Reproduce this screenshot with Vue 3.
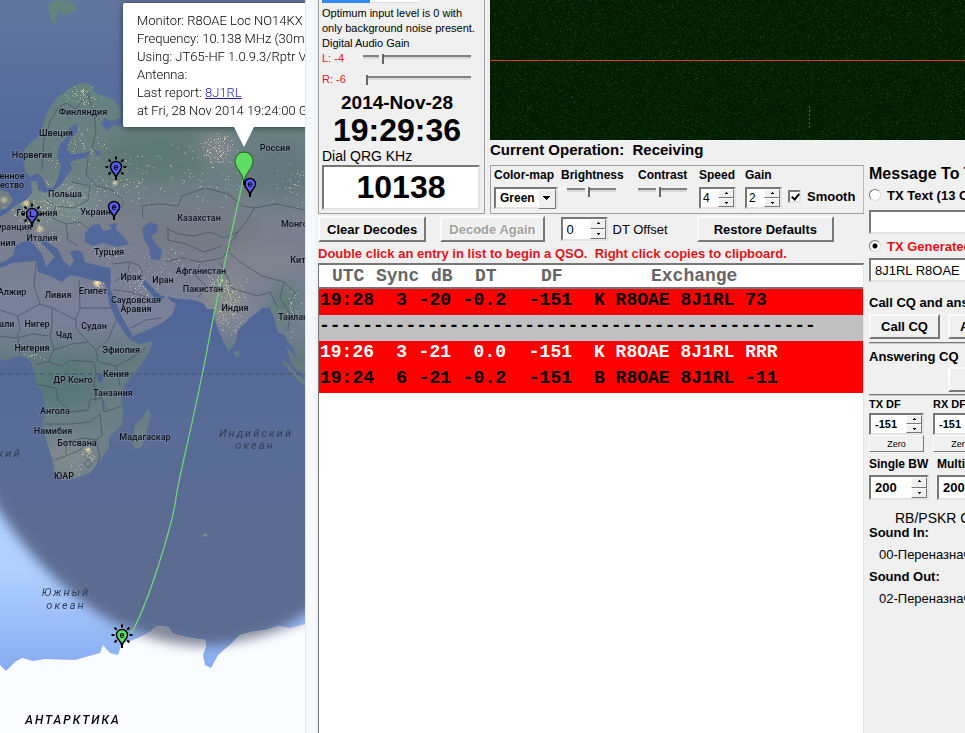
<script setup>
import { ref, onMounted } from 'vue'

const labels = [
  [83, 115, 'Финляндия'], [56, 136, 'Швеция'], [32, 158, 'Норвегия'], [12, 179, 'енное'], [12, 188, 'ество'],
  [65, 197, 'Польша'], [37, 216, 'Германия'], [98, 215, 'Украина'], [13, 230, 'Франция'], [42, 241, 'Италия'],
  [275, 151, 'Россия'], [199, 221, 'Казахстан'], [302, 227, 'Монголия'], [8, 246, 'ния'],
  [109, 255, 'Турция'], [131, 280, 'Ирак'], [163, 283, 'Иран'], [201, 274, 'Афганистан'], [203, 292, 'Пакистан'],
  [303, 263, 'Китай'], [12, 295, 'Алжир'], [58, 298, 'Ливия'], [93, 294, 'Египет'], [136, 303, 'Саудовская'],
  [136, 312, 'Аравия'], [235, 311, 'Индия'], [296, 320, 'Таиланд'], [3, 327, 'Мали'], [37, 327, 'Нигер'],
  [94, 329, 'Судан'], [64, 338, 'Чад'], [32, 351, 'Нигерия'], [121, 353, 'Эфиопия'], [116, 377, 'Кения'],
  [73, 383, 'ДР Конго'], [113, 396, 'Танзания'], [55, 414, 'Ангола'], [53, 434, 'Намибия'], [77, 446, 'Ботсвана'],
  [145, 440, 'Мадагаскар'], [64, 479, 'ЮАР']
]

const pins = [
  { x: 116, y: 180, c: 'e', sun: true, fill: '#5a5cf5' },
  { x: 114, y: 220, c: 'e', sun: false, fill: '#5a5cf5' },
  { x: 32, y: 227, c: 'L', sun: true, fill: '#5a5cf5' },
  { x: 250, y: 197, c: 'e', sun: false, fill: '#5a5cf5' },
  { x: 122, y: 648, c: 'e', sun: true, fill: '#5fdc62' }
]
const rays = [0, 45, 90, 135, 225, 270, 315]

function seeded(seed) {
  let s = seed
  return () => {
    s = (s * 1664525 + 1013904223) % 4294967296
    return s / 4294967296
  }
}

// [centre x, centre y, radius x, radius y, count]
const cities = [
  [25, 212, 28, 16, 120], [65, 200, 34, 26, 110], [80, 96, 24, 12, 70], [75, 150, 34, 24, 80], [118, 178, 34, 30, 90],
  [218, 148, 18, 16, 110], [200, 175, 60, 40, 90], [232, 305, 18, 32, 150], [218, 284, 14, 10, 60],
  [100, 288, 6, 8, 30], [140, 285, 20, 22, 60], [45, 240, 18, 14, 50], [110, 252, 24, 8, 30], [88, 452, 8, 8, 18],
  [30, 355, 18, 6, 18], [290, 310, 14, 30, 40], [170, 262, 34, 20, 40], [290, 180, 20, 34, 40], [78, 462, 20, 14, 16]
]
const rnd = seeded(11)
const lights = cities.flatMap(([cx, cy, rx, ry, n]) =>
  Array.from({ length: n }, () => ({
    x: Math.round(cx + (rnd() + rnd() - 1) * rx),
    y: Math.round(cy + (rnd() + rnd() - 1) * ry),
    o: 0.2 + rnd() * 0.5
  }))
)

const rows = [
  { tone: 'dark', cells: ['19:28', '3', '-20', '-0.2', '-151', 'K R8OAE 8J1RL 73'] },
  { tone: 'divider', text: '-'.repeat(46) },
  { tone: 'light', cells: ['19:26', '3', '-21', '0.0', '-151', 'K R8OAE 8J1RL RRR'] },
  { tone: 'dark', cells: ['19:24', '6', '-21', '-0.2', '-151', 'B R8OAE 8J1RL -11'] }
]

const waterfall = ref(null)
const mode = ref('generated')
const txText = ref('')
const txGenerated = ref('8J1RL R8OAE')

onMounted(() => {
  const c = waterfall.value
  c.width = c.clientWidth
  c.height = c.clientHeight
  const g = c.getContext('2d')
  const img = g.createImageData(c.width, c.height)
  const r = seeded(77)
  for (let i = 0; i < c.width * c.height; i++) {
    const n = r() * r() * r()
    const spark = r() > 0.997 ? 40 : 0
    img.data[i * 4] = 2 + n * 16 + spark / 3
    img.data[i * 4 + 1] = 26 + n * 56 + spark
    img.data[i * 4 + 2] = 2 + n * 18 + spark / 3
    img.data[i * 4 + 3] = 255
  }
  g.putImageData(img, 0, 0)
  g.fillStyle = '#2a7430'
  for (let y = 106; y < 130; y += 4) g.fillRect(319, y, 1, 2)
  g.fillStyle = '#d2460f'
  g.fillRect(0, 60, c.width, 1)
})
</script>

<template>
  <div class="screen">
    <section class="map">
      <svg class="map-art" viewBox="0 0 305 733" preserveAspectRatio="xMinYMin slice">
        <defs>
          <linearGradient id="day" x1="0" y1="0" x2="0" y2="1">
            <stop offset="0.78" stop-color="#b0d0ff" />
            <stop offset="0.92" stop-color="#86aaf0" />
          </linearGradient>
          <linearGradient id="night" x1="0" y1="0" x2="0" y2="733" gradientUnits="userSpaceOnUse">
            <stop offset="0" stop-color="#61759d" />
            <stop offset="0.2" stop-color="#53699c" />
            <stop offset="0.4" stop-color="#4f6598" />
            <stop offset="0.58" stop-color="#586c97" />
            <stop offset="0.75" stop-color="#5c6c91" />
          </linearGradient>
          <linearGradient id="ground" x1="0" y1="80" x2="0" y2="480" gradientUnits="userSpaceOnUse">
            <stop offset="0" stop-color="#64837f" />
            <stop offset="0.24" stop-color="#6b7f82" />
            <stop offset="0.36" stop-color="#797f8c" />
            <stop offset="0.6" stop-color="#7a809a" />
            <stop offset="0.7" stop-color="#637b7f" />
            <stop offset="1" stop-color="#72848b" />
          </linearGradient>
          <filter id="soft" x="-20%" y="-20%" width="140%" height="140%" color-interpolation-filters="sRGB"><feGaussianBlur stdDeviation="6" /></filter>
          <filter id="edge" x="-20%" y="-20%" width="140%" height="140%" color-interpolation-filters="sRGB"><feGaussianBlur stdDeviation="8" /></filter>
          <clipPath id="landClip">
            <path id="land" d="M24 150L30 143L38 137L43 125L47 113L52 104L58 97L66 91L74 86L83 82L92 85L95 93L104 96L113 100L120 107L121 117L113 121L104 118L101 124L107 131L114 125L121 127L124 120L122 100H310V376L303 374L297 360L294 349L288 342L284 334L278 333L274 318L270 308L262 308L258 312L250 318L241 327L237 332L236 342L229 351L224 343L219 332L215 320L214 309L207 309L203 303L194 300L178 299L170 297L162 296L156 292L149 284L144 280L143 285L150 292L155 299L162 300L166 295L170 300L176 304L172 315L162 323L150 329L133 336L129 329L121 315L117 305L110 288L111 278L110 268L100 266L92 264L85 262L82 252L76 250L70 252L74 261L70 267L63 260L58 249L50 244L43 238L40 242L48 250L55 257L50 262L46 267L42 254L35 246L30 240L22 242L15 246L14 254L7 260L0 263V217L8 212L16 205L26 200L32 193L31 181L37 181L38 190L45 193L55 190L63 182L67 176L72 169L70 163L77 159L86 158L92 151L82 153L72 154L67 149L70 139L78 132L77 123L69 128L67 136L59 146L57 157L61 166L58 177L54 187L47 188L43 178L37 173L31 177L25 172ZM0 268L13 263L36 261L38 272L50 276L62 282L70 275L80 277L92 280L104 282L107 289L109 303L115 318L122 329L130 340L139 344L153 341L149 353L137 370L126 383L121 395L123 410L122 425L109 437L109 447L100 460L90 473L76 478L62 480L55 474L53 461L48 446L42 426L46 411L44 395L37 384L34 373L32 363L24 356L14 357L6 361L0 359ZM148 408L151 417L147 429L142 446L135 449L132 441L135 425L143 418ZM233 352L239 351L240 356L236 358ZM280 358L288 364L297 374L305 380V386L296 378L287 368ZM286 345L291 352L297 359L302 372L296 370L290 360ZM0 190L8 192L13 200L7 208L0 210ZM48 4L56 0L72 1L77 9L66 15L59 12L54 25L50 17Z" />
          </clipPath>
          <clipPath id="iceClip">
            <path d="M0 665L6 671L15 662L22 658L33 661L45 659L75 660L100 653L103 645L110 653L118 655L122 643L133 640L140 637L150 632L157 626L168 627L173 634L190 638L205 640L206 647L203 655L205 665L211 668L218 655L232 643L240 635L251 632L265 630L279 626L290 628L305 624V733H0Z" />
          </clipPath>
        </defs>

        <rect width="305" height="733" fill="url(#day)" />
        <path filter="url(#soft)" fill="url(#night)" d="M-40 -40H345V580Q315 612 274 632Q240 646 208 646Q160 644 112 622Q44 582 -4 506L-40 440Z" />
        <use href="#land" fill="url(#ground)" />
        <g clip-path="url(#landClip)">
          <g filter="url(#edge)">
            <ellipse cx="160" cy="155" rx="60" ry="24" fill="#5e7977" />
            <ellipse cx="280" cy="170" rx="34" ry="26" fill="#64777c" />
            <ellipse cx="218" cy="148" rx="20" ry="16" fill="#7d848e" />
            <ellipse cx="200" cy="232" rx="60" ry="24" fill="#757c85" />
            <ellipse cx="262" cy="262" rx="40" ry="18" fill="#7f838d" />
            <ellipse cx="60" cy="205" rx="40" ry="22" fill="#788a8a" />
            <ellipse cx="225" cy="300" rx="22" ry="24" fill="#878c8c" />
            <ellipse cx="285" cy="305" rx="16" ry="24" fill="#627d7a" />
            <ellipse cx="65" cy="385" rx="34" ry="22" fill="#587877" />
            <ellipse cx="70" cy="455" rx="24" ry="16" fill="#828a8f" />
          </g>
          <g fill="none" stroke="#424a5c" stroke-width="0.8" opacity="0.8">
            <path d="M42 170L44 140L50 122L58 108L66 103L76 109L86 97L90 92M88 95L94 112L96 132L92 148M88 158L86 175L96 186L112 190L124 202L118 212M72 182L90 186L88 200L74 208L56 206L46 200M56 206L52 218L66 224L80 222L92 232M30 200L32 214L24 224L30 236M66 224L68 240L78 246" />
            <path d="M143 218L142 206L160 204L178 206L182 196L205 188L228 194L243 206L254 208L246 222L238 232L224 238L210 232L194 236L178 234L166 228M254 208L276 204L305 210M238 232L226 250L240 262L262 276L284 282L296 294M168 228L168 240L186 244L204 252L222 246M164 262L182 258L200 262L196 276L206 286L198 298M200 262L222 258L230 248M220 262L228 278L232 288L258 296L270 292L278 308M284 282L280 298L290 314L288 330" />
            <path d="M112 264L130 262L140 266L143 278M130 262L128 272L114 282M114 290L130 292L144 296L152 302M131 328L146 320L162 318M36 264L34 286L40 304L52 308L76 320M79 280L80 308H112M80 308L76 318V328L88 342L96 350L108 340L116 320M0 310L18 316L40 304M18 316L20 330L16 338L0 336M52 308L52 326L50 336L32 334L18 338L20 355M50 336L54 350L48 362L36 364M54 350L72 344L88 342M48 362L62 366L70 360L94 362L96 374L94 384L96 402M96 350L98 362L116 366L128 360L146 348M116 366L120 386M35 384L56 388L58 400L70 412L88 410L90 400L102 398L104 412L122 406M44 424L72 424L90 422L100 414L102 436L96 440L84 438L66 442V456L54 460M66 456L80 450L90 438M96 440L100 456L96 468M84 464L88 459L92 463L88 468Z" />
          </g>
          <rect v-for="(p, i) in lights" :key="i" :x="p.x" :y="p.y" width="1" height="1" fill="#fff0b8" :opacity="p.o" />
          <g fill="#ffe9a0" filter="blur(1px)">
            <circle cx="115" cy="183" r="2" /><circle cx="97" cy="283" r="3" /><circle cx="88" cy="450" r="2" />
            <circle cx="26" cy="203" r="3" opacity="0.7" /><circle cx="4" cy="200" r="3" opacity="0.5" /><circle cx="40" cy="229" r="3" opacity="0.6" />
          </g>
          <path d="M98 375H103L102 381H98ZM103 400L107 411" fill="#4f6598" stroke="#4f6598" />
        </g>
        <path fill="#53699c" d="M85 233L92 225L100 224L103 231L112 229L108 225L117 223L116 229L124 237L129 244L116 247L103 243L92 246L85 242ZM142 228L150 222L158 225L157 233L151 236L156 244L162 250L160 260L151 259L149 248L144 240ZM105 119L110 124L107 127ZM94 150L101 151L98 157Z" />
        <path d="M202 535L206 533L208 536L204 537Z" fill="#7b8a8c" />
        <path d="M0 374H305" stroke="#45506d" stroke-dasharray="5 3" />

        <g clip-path="url(#iceClip)">
          <rect y="600" width="305" height="133" fill="#fbfcff" />
          <path filter="url(#soft)" fill="#5c6078" opacity="0.75" d="M100 580H345V592Q300 634 208 646Q160 646 112 622Z" />
        </g>

        <path d="M243 180C236 215 222 270 208 345S178 480 176 498S152 596 131 634" fill="none" stroke="#6fd47c" stroke-width="1.3" />

        <g class="country">
          <text v-for="[x, y, t] in labels" :key="t + y" :x="x" :y="y">{{ t }}</text>
        </g>
        <g class="ocean">
          <text x="256" y="437">Индийский</text>
          <text x="255" y="449">океан</text>
          <text x="2" y="457">еский</text>
          <text x="66" y="596">Южный</text>
          <text x="66" y="609">океан</text>
          <text x="73" y="724" class="continent">АНТАРКТИКА</text>
        </g>

        <g v-for="p in pins" :key="p.x + '-' + p.y" :transform="`translate(${p.x} ${p.y})`">
          <g v-if="p.sun" stroke="#000" stroke-width="2">
            <path v-for="a in rays" :key="a" d="M0 -7.5V-10.5" :transform="`translate(0 -13) rotate(${a})`" />
          </g>
          <path d="M0 0V-5" stroke="#000" stroke-width="2" />
          <path d="M0 -2.5C-1 -7 -5.5 -9 -5.5 -13A5.5 5.5 0 0 1 5.5 -13C5.5 -9 1 -7 0 -2.5Z" :fill="p.fill" stroke="#000" stroke-width="1.4" />
          <text class="pin-letter" y="-10">{{ p.c }}</text>
        </g>
        <path d="M244 183C243 172 235 169 235 161A9 9 0 0 1 253 161C253 169 245 172 244 183Z" fill="#5fdc62" stroke="#1d5c24" stroke-width="1" />
        <rect x="243" y="181" width="3" height="4" />
      </svg>

      <div class="info">
        Monitor: R8OAE Loc NO14KX<br />
        Frequency: 10.138 MHz (30m)<br />
        Using: JT65-HF 1.0.9.3/Rptr V1<br />
        Antenna:<br />
        Last report: <a href="#">8J1RL</a><br />
        at Fri, 28 Nov 2014 19:24:00 GMT
      </div>
    </section>

    <main class="app">
      <section class="audio">
        <div class="meter"><span></span></div>
        <p>Optimum input level is 0 with<br />only background noise present.</p>
        <p>Digital Audio Gain</p>
        <label class="gain">L: -4 <input type="range" min="0" max="100" value="16" /></label>
        <label class="gain">R: -6 <input type="range" min="0" max="100" value="0" /></label>
        <div class="date">2014-Nov-28</div>
        <div class="clock">19:29:36</div>
        <label class="dial-label" for="dial">Dial QRG KHz</label>
        <input id="dial" class="dial" value="10138" />
      </section>

      <canvas ref="waterfall" class="waterfall"></canvas>

      <h2 class="operation">Current Operation:&nbsp; Receiving</h2>

      <section class="display">
        <div class="field">
          <label for="cmap">Color-map</label>
          <div class="select"><select id="cmap"><option>Green</option></select></div>
        </div>
        <div class="field slide"><label for="bri">Brightness</label><input id="bri" type="range" value="42" /></div>
        <div class="field slide contrast"><label for="con">Contrast</label><input id="con" type="range" value="42" /></div>
        <div class="field">
          <label for="speed">Speed</label>
          <div class="spin"><input id="speed" value="4" /><button aria-label="Up"></button><button aria-label="Down"></button></div>
        </div>
        <div class="field">
          <label for="gain">Gain</label>
          <div class="spin"><input id="gain" value="2" /><button aria-label="Up"></button><button aria-label="Down"></button></div>
        </div>
        <label class="smooth"><input type="checkbox" checked />Smooth</label>
      </section>

      <section class="decodes">
        <div class="actions">
          <button class="btn">Clear Decodes</button>
          <button class="btn again" disabled>Decode Again</button>
          <div class="spin offset"><input id="dt" value="0" /><button aria-label="Up"></button><button aria-label="Down"></button></div>
          <label for="dt">DT Offset</label>
          <button class="btn restore">Restore Defaults</button>
        </div>
        <p class="hint">Double click an entry in list to begin a QSO.&nbsp; Right click copies to clipboard.</p>
        <div class="list">
          <table>
            <colgroup>
              <col class="c-utc" /><col class="c-sync" /><col class="c-db" /><col class="c-dt" /><col class="c-df" /><col />
            </colgroup>
            <thead>
              <tr><th>UTC</th><th>Sync</th><th>dB</th><th>DT</th><th>DF</th><th>Exchange</th></tr>
            </thead>
            <tbody>
              <tr v-for="(r, i) in rows" :key="i" :class="r.tone">
                <td v-if="r.text" colspan="6">{{ r.text }}</td>
                <template v-else><td v-for="(c, j) in r.cells" :key="j">{{ c }}</td></template>
              </tr>
            </tbody>
          </table>
        </div>
      </section>

      <aside class="message">
        <h2>Message To TX</h2>
        <label class="radio"><input v-model="mode" type="radio" name="mode" value="text" />TX Text (13 Characters)</label>
        <input v-model="txText" class="line" aria-label="TX Text" />
        <label class="radio active"><input v-model="mode" type="radio" name="mode" value="generated" />TX Generated</label>
        <input v-model="txGenerated" class="line" aria-label="TX Generated" />
        <h3 class="call">Call CQ and answer</h3>
        <div class="pair calls"><button class="btn">Call CQ</button><button class="btn">Answer</button></div>
        <h3 class="answering">Answering CQ</h3>
        <div class="pair reply"><button class="btn" aria-label="Reply"></button></div>
        <div class="pair df">
          <div>
            <label for="txdf">TX DF</label>
            <div class="spin"><input id="txdf" value="-151" /><button aria-label="Up"></button><button aria-label="Down"></button></div>
            <button class="btn zero">Zero</button>
          </div>
          <div>
            <label for="rxdf">RX DF</label>
            <div class="spin"><input id="rxdf" value="-151" /><button aria-label="Up"></button><button aria-label="Down"></button></div>
            <button class="btn zero">Zero</button>
          </div>
        </div>
        <div class="pair bw">
          <div>
            <label for="single">Single BW</label>
            <div class="spin"><input id="single" value="200" /><button aria-label="Up"></button><button aria-label="Down"></button></div>
          </div>
          <div>
            <label for="multi">Multi BW</label>
            <div class="spin"><input id="multi" value="200" /><button aria-label="Up"></button><button aria-label="Down"></button></div>
          </div>
        </div>
        <div class="rb">RB/PSKR Call</div>
        <h3>Sound In:</h3>
        <div class="device">00-Переназначение</div>
        <h3>Sound Out:</h3>
        <div class="device">02-Переназначение</div>
      </aside>
    </main>
  </div>
</template>

<style>
body {
  margin: 0;
  background: #f0f0f0;
}
</style>

<style scoped>
* {
  box-sizing: border-box;
}
.screen {
  display: grid;
  grid-template-columns: minmax(0, 305fr) minmax(0, 660fr);
  height: 100vh;
  overflow: hidden;
  font-family: 'Liberation Sans', Arial, sans-serif;
  color: #000;
}
p, h2, h3 {
  margin: 0;
}
input, button, select {
  font: inherit;
  color: inherit;
  margin: 0;
  padding: 0;
}

/* map */
.map {
  position: relative;
  overflow: hidden;
  background: #5a698c;
}
.map-art {
  display: block;
  width: 100%;
  height: 100%;
}
.country text {
  font: 500 9px Roboto, sans-serif;
  text-anchor: middle;
  fill: #10131c;
  stroke: #8f96a8;
  stroke-opacity: 0.35;
  stroke-width: 2px;
  paint-order: stroke;
}
.ocean text {
  font: italic 11px Roboto, sans-serif;
  letter-spacing: 2px;
  text-anchor: middle;
  fill: #343e58;
}
.ocean .continent {
  font-size: 12px;
  font-weight: 500;
  fill: #000;
}
.pin-letter {
  font: 700 9px 'Liberation Sans', sans-serif;
  text-anchor: middle;
}
.info {
  position: absolute;
  left: 123px;
  top: 3px;
  padding: 9px 14px 7px;
  background: #fff;
  border-radius: 2px;
  box-shadow: 0 1px 6px rgba(0, 0, 0, 0.5);
  font: 300 13px/18px Roboto, sans-serif;
  white-space: nowrap;
}
.info::after {
  content: '';
  position: absolute;
  left: 111px;
  top: 100%;
  border: 10px solid transparent;
  border-top: 20px solid #fff;
  border-bottom: 0;
}
.info a {
  color: #1a1acc;
}

/* application window */
.app {
  display: grid;
  grid-template-columns: 172px minmax(0, 374fr) minmax(0, 101fr);
  grid-template-rows: 140px 25px 49px minmax(0, 1fr);
  padding-left: 12px;
  background: linear-gradient(90deg, #f5f8fc 8px, #f0f0f0 12px);
  border-left: 1px solid #dfe6f0;
  overflow: hidden;
}
.audio {
  grid-row: 1 / 4;
  display: flex;
  flex-direction: column;
  margin-right: 5px;
  padding: 0 4px 3px 3px;
  border: 1px solid #a0a0a0;
  border-top: 0;
  font-size: 11px;
  line-height: 15px;
  white-space: nowrap;
}
.meter {
  width: 98px;
  height: 3px;
  margin-bottom: 3px;
  background: #fff;
  border-bottom: 1px solid #ddd;
}
.meter span {
  display: block;
  width: 49%;
  height: 3px;
  background: #3489f0;
}
.gain {
  display: flex;
  align-items: center;
  justify-content: space-between;
  height: 21px;
  padding-right: 9px;
  padding-bottom: 6px;
  color: #e0141c;
}
.gain input {
  width: 108px;
}
input[type='range'] {
  appearance: none;
  height: 10px;
  background: linear-gradient(#808080 0 2px, #d8d8d8 2px 4px, transparent 4px) 0 1px no-repeat;
}
input[type='range']::-webkit-slider-thumb {
  appearance: none;
  width: 5px;
  height: 10px;
  background: #f0f0f0;
  border-right: 2px solid #666;
}
.date {
  padding-right: 8px;
  text-align: center;
  font-weight: 700;
  font-size: 19px;
  line-height: 20px;
}
.clock {
  padding-right: 8px;
  text-align: center;
  font-weight: 700;
  font-size: 32px;
  line-height: 35px;
}
.dial-label {
  font-size: 14px;
  line-height: 17px;
}
.dial {
  width: 100%;
  flex: 1;
  min-height: 0;
  text-align: center;
  font-weight: 700;
  font-size: 32px;
}
.dial, .line, .spin {
  background: #fff;
  border: 2px solid;
  border-color: #777 #e3e3e3 #e3e3e3 #777;
}
.waterfall {
  grid-column: 2 / 4;
  width: 100%;
  height: 140px;
  background: #021c03;
}
.operation {
  grid-column: 2;
  font-size: 15px;
  line-height: 20px;
  white-space: nowrap;
}
.display {
  grid-column: 2;
  display: flex;
  padding: 2px 3px 0;
  border: 1px solid #a0a0a0;
  border-right-color: #b8b8b8;
  font-weight: 700;
  font-size: 12px;
  line-height: 14px;
}
.field {
  flex: none;
  display: flex;
  flex-direction: column;
  gap: 5px;
  margin-right: 8px;
  width: 38px;
  white-space: nowrap;
}
.field:first-child {
  width: 64px;
  margin-right: 3px;
}
.slide {
  width: 70px;
  margin-right: 7px;
}
.contrast {
  width: 54px;
}
.slide input {
  width: 49px;
  margin-left: 6px;
}
.contrast input {
  margin-left: 0;
}
.select {
  position: relative;
  height: 22px;
  border: 2px solid;
  border-color: #777 #e3e3e3 #e3e3e3 #777;
  background: #fff;
}
.select select {
  appearance: none;
  width: 100%;
  height: 18px;
  padding-left: 4px;
  border: 0;
  background: none;
}
.select::after {
  content: '';
  position: absolute;
  right: 0;
  top: 0;
  width: 16px;
  height: 18px;
  pointer-events: none;
  border: 1px solid;
  border-color: #fff #777 #777 #fff;
  background: linear-gradient(#000, #000) 4px 6px / 7px 1px no-repeat, linear-gradient(#000, #000) 5px 7px / 5px 1px no-repeat,
    linear-gradient(#000, #000) 6px 8px / 3px 1px no-repeat, linear-gradient(#000, #000) 7px 9px / 1px 1px no-repeat, #f0f0f0;
}
.spin {
  display: grid;
  grid-template-columns: minmax(0, 1fr) 16px;
  grid-template-rows: 1fr 1fr;
  width: 37px;
  height: 22px;
  font-weight: 400;
}
.spin input {
  grid-row: 1 / 3;
  width: 100%;
  padding-left: 2px;
  border: 0;
  background: none;
}
.spin button {
  border: 1px solid;
  border-color: #fff #777 #777 #fff;
  background: linear-gradient(#000, #000) 6px 3px / 3px 1px no-repeat, linear-gradient(#000, #000) 7px 2px / 1px 1px no-repeat, #f0f0f0;
}
.spin button:last-child {
  background: linear-gradient(#000, #000) 6px 3px / 3px 1px no-repeat, linear-gradient(#000, #000) 7px 4px / 1px 1px no-repeat, #f0f0f0;
}
.smooth {
  display: flex;
  align-items: center;
  gap: 6px;
  padding-top: 12px;
  margin-left: -3px;
  font-size: 13px;
}
.smooth input {
  flex: none;
  appearance: none;
  width: 13px;
  height: 13px;
  border: 2px solid;
  border-color: #777 #e3e3e3 #e3e3e3 #777;
  background: #fff;
  position: relative;
}
.smooth input:checked::after {
  content: '';
  position: absolute;
  left: 3px;
  top: 0;
  width: 3px;
  height: 6px;
  border: solid #000;
  border-width: 0 2px 2px 0;
  transform: rotate(40deg);
}

/* decodes */
.decodes {
  grid-column: 1 / 3;
  display: flex;
  flex-direction: column;
  min-height: 0;
  white-space: nowrap;
}
.actions {
  display: flex;
  align-items: center;
  padding: 2px 0 3px;
  font-size: 13px;
}
.btn {
  height: 26px;
  padding: 0 7px;
  border: 2px solid;
  border-color: #fcfcfc #777 #777 #fcfcfc;
  background: #f0f0f0;
  font-weight: 700;
  font-size: 13px;
}
.btn:disabled {
  color: #a0a0a0;
  text-shadow: 1px 1px 0 #fff;
}
.again {
  margin: 0 16px 0 14px;
}
.offset {
  width: 47px;
  height: 24px;
  margin-right: 5px;
  font-size: 13px;
}
.offset input {
  padding-left: 4px;
}
.restore {
  margin-left: auto;
  margin-right: 30px;
  padding: 0 15px;
}
.hint {
  color: #e0141c;
  font-weight: 700;
  font-size: 13px;
  line-height: 17px;
}
.list {
  flex: 1;
  margin-top: 1px;
  background: #fff;
  border: solid #777;
  border-width: 2px 0 0 1px;
  border-right: 1px solid #e3e3e3;
}
table {
  width: 100%;
  table-layout: fixed;
  border-collapse: collapse;
  font: 700 18px/26px 'Liberation Mono', 'Courier New', monospace;
}
.c-utc { width: 55px; }
.c-sync { width: 33px; }
.c-db { width: 44px; }
.c-dt { width: 55px; }
.c-df { width: 66px; }
th, td {
  padding: 0;
  text-align: right;
}
th {
  height: 23px;
  line-height: 20px;
  text-align: left;
  color: #666;
  border-bottom: 2px solid #777;
}
th:nth-child(1) { padding-left: 13px; }
th:nth-child(2) { padding-left: 2px; }
th:nth-child(3), th:nth-child(4) { padding-left: 24px; }
th:nth-child(5) { padding-left: 35px; }
th:nth-child(6) { padding-left: 79px; }
td {
  height: 26px;
  line-height: 22px;
  padding-bottom: 4px;
}
td:last-child {
  padding-left: 22px;
  text-align: left;
}
.divider td:last-child {
  padding-left: 0;
}
.dark { background: #f00; }
.light { background: #f00; color: #fff; }
.divider { background: #c0c0c0; }

/* message panel */
.message {
  grid-column: 3;
  grid-row: 2 / 5;
  padding: 23px 0 0 5px;
  font-size: 13px;
  white-space: nowrap;
  overflow: hidden;
}
.message h2 {
  font-size: 16px;
  line-height: 21px;
}
.message h3 {
  font-size: 13px;
  line-height: 16px;
}
.radio {
  display: flex;
  align-items: center;
  gap: 6px;
  height: 22px;
  font-weight: 700;
}
.radio input {
  flex: none;
  appearance: none;
  width: 12px;
  height: 12px;
  border: 1px solid;
  border-color: #777 #ddd #ddd #777;
  border-radius: 50%;
  background: #fff;
}
.radio input:checked {
  background: radial-gradient(circle, #000 2px, #fff 3px);
}
.radio.active {
  color: #e0141c;
}
.line {
  display: block;
  width: 240px;
  height: 24px;
  margin: 4px 0 1px;
  padding-left: 4px;
}
.radio.active + .line {
  margin: 1px 0 0;
}
.call {
  margin-top: 13px;
}
.pair {
  display: flex;
}
.calls {
  gap: 8px;
  padding: 3px 0;
  border-bottom: 2px groove #ccc;
}
.calls .btn {
  flex: none;
  height: 25px;
  width: 71px;
  padding: 0 4px;
}
.message .answering {
  margin-top: 5px;
}
.reply {
  padding: 2px 0 2px 79px;
  border-bottom: 2px groove #ccc;
}
.reply .btn {
  width: 71px;
  flex: none;
  height: 25px;
}
.df {
  gap: 9px;
  font-size: 11px;
  font-weight: 700;
}
.df label, .bw label {
  display: block;
  line-height: 17px;
}
.df .spin {
  width: 55px;
  font-weight: 700;
}
.df .spin input {
  padding-left: 4px;
}
.zero {
  display: block;
  width: 55px;
  height: 17px;
  padding: 0;
  border-width: 1px;
  font-weight: 400;
  font-size: 9px;
}
.bw {
  gap: 8px;
  margin-top: 4px;
  font-size: 12px;
  font-weight: 700;
}
.bw .spin {
  width: 60px;
  height: 25px;
  margin-top: 2px;
  font-weight: 700;
  font-size: 13px;
}
.bw .spin input {
  padding-left: 4px;
}
.rb {
  padding: 11px 0 0 26px;
  font-size: 14px;
  line-height: 14px;
}
.device {
  height: 28px;
  padding-left: 10px;
  line-height: 27px;
}
</style>
